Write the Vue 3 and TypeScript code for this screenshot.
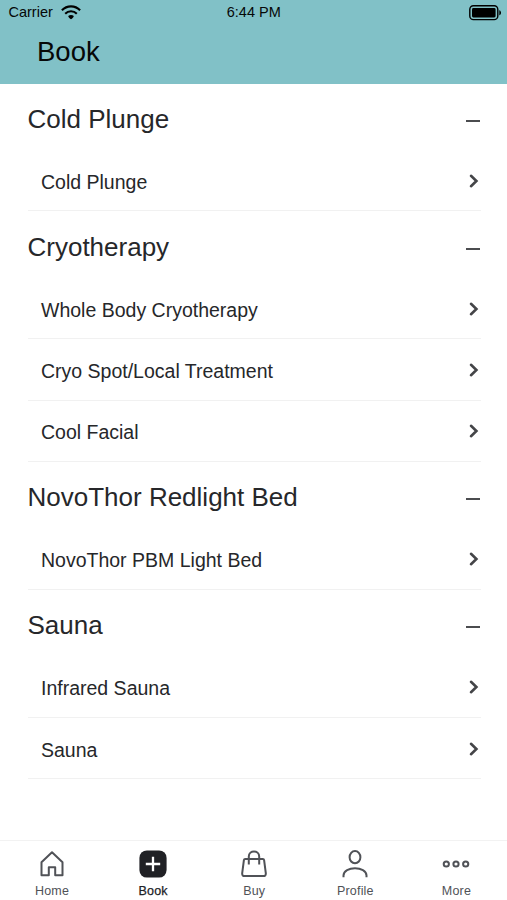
<script setup lang="ts">
interface Section {
  title: string
  items: string[]
}

type TabIcon = 'home' | 'book' | 'buy' | 'profile' | 'more'

interface Tab {
  label: string
  icon: TabIcon
}

const sections: Section[] = [
  { title: 'Cold Plunge', items: ['Cold Plunge'] },
  { title: 'Cryotherapy', items: ['Whole Body Cryotherapy', 'Cryo Spot/Local Treatment', 'Cool Facial'] },
  { title: 'NovoThor Redlight Bed', items: ['NovoThor PBM Light Bed'] },
  { title: 'Sauna', items: ['Infrared Sauna', 'Sauna'] },
]

const tabs: Tab[] = [
  { label: 'Home', icon: 'home' },
  { label: 'Book', icon: 'book' },
  { label: 'Buy', icon: 'buy' },
  { label: 'Profile', icon: 'profile' },
  { label: 'More', icon: 'more' },
]

const activeTab: TabIcon = 'book'
</script>

<template>
  <div class="screen">
    <header class="top">
      <div class="status">
        <div class="carrier">
          <span>Carrier</span>
          <svg class="wifi" width="20" height="15" viewBox="0 0 20 15">
            <g fill="none" stroke="#000" stroke-width="2.1">
              <path d="M0.9 5.3C5.9 0.1 14.1 0.1 19.1 5.3" />
              <path d="M4.2 8.7C7.4 5.4 12.6 5.4 15.8 8.7" />
            </g>
            <path d="M7.2 11.1C8.8 9.6 11.2 9.6 12.8 11.1C12.6 12.4 11 14 10 14.2C9 14 7.4 12.4 7.2 11.1Z" />
          </svg>
        </div>
        <span class="time">6:44 PM</span>
        <svg class="battery" width="33" height="16" viewBox="0 0 33 16">
          <rect x="0.8" y="0.8" width="28" height="13.8" rx="3.6" fill="none" stroke="#000" stroke-width="1.4" />
          <rect x="3" y="3" width="23.6" height="9.4" rx="1.4" />
          <path d="M30.3 5.2C32.6 5.8 32.6 9.6 30.3 10.2Z" />
        </svg>
      </div>
      <h1>Book</h1>
    </header>

    <main>
      <section v-for="section in sections" :key="section.title">
        <h2>
          <span>{{ section.title }}</span>
          <i class="minus"></i>
        </h2>
        <ul>
          <li v-for="item in section.items" :key="item">
            <span>{{ item }}</span>
            <svg class="chevron" width="12" height="16" viewBox="0 0 12 16">
              <path d="M3 2.8L8.4 8L3 13.2" fill="none" stroke="#444548" stroke-width="2.6" stroke-linecap="round" />
            </svg>
          </li>
        </ul>
      </section>
    </main>

    <nav>
      <div v-for="tab in tabs" :key="tab.icon" class="tab" :class="{ active: tab.icon === activeTab }">
        <svg width="30" height="30" viewBox="0 0 30 30" fill="none" stroke="#505257" stroke-width="2">
          <path
            v-if="tab.icon === 'home'"
            d="M4.5 13.2L15 3.2L25.5 13.2V26.3H18.2V18.2H11.8V26.3H4.5Z"
            stroke-linejoin="round"
          />
          <template v-else-if="tab.icon === 'book'">
            <rect x="1.4" y="1.4" width="27.2" height="27.2" rx="7.5" fill="#202125" stroke="none" />
            <path d="M15 7.8V22.2M7.8 15H22.2" stroke="#fff" stroke-width="2.3" />
          </template>
          <template v-else-if="tab.icon === 'buy'">
            <path
              d="M6.2 10H23.8C24.6 10 25 10.4 25.1 11.1L26.8 24C27 26 26.2 27.1 24.4 27.1H5.6C3.8 27.1 3 26 3.2 24L4.9 11.1C5 10.4 5.4 10 6.2 10Z"
            />
            <path d="M9.8 15.5V7.4C9.8 0.8 20.2 0.8 20.2 7.4V15.5" />
          </template>
          <template v-else-if="tab.icon === 'profile'">
            <ellipse cx="15" cy="8.2" rx="5.4" ry="6.1" />
            <path d="M3.5 28.2V26.6C3.5 16.8 26.5 16.8 26.5 26.6V28.2" />
          </template>
          <template v-else>
            <circle cx="5.3" cy="15" r="2.6" />
            <circle cx="15" cy="15" r="2.6" />
            <circle cx="24.7" cy="15" r="2.6" />
          </template>
        </svg>
        <span>{{ tab.label }}</span>
      </div>
    </nav>
  </div>
</template>

<style>
body {
  margin: 0;
  background: #fff;
}
</style>

<style scoped>
.screen {
  box-sizing: border-box;
  width: 507px;
  height: 900px;
  display: flex;
  flex-direction: column;
  overflow: hidden;
  background: #fff;
  color: #26272a;
  font-family: 'Liberation Sans', Arial, sans-serif;
}

.top {
  box-sizing: border-box;
  height: 83.5px;
  flex: none;
  background: #81c1c7;
  color: #060808;
}

.status {
  display: grid;
  grid-template-columns: 1fr auto 1fr;
  align-items: center;
  height: 25px;
  padding: 0 5px 0 8.5px;
  font-size: 14.5px;
}

.status span {
  padding-bottom: 2px;
}

.carrier {
  display: flex;
  align-items: center;
  gap: 8px;
}

.time {
  padding-right: 3px;
}

.battery {
  justify-self: end;
}

h1 {
  margin: 10px 0 0 37px;
  font-size: 27.5px;
  line-height: 34px;
  font-weight: 400;
}

main {
  flex: 1;
  padding: 0 26px 0 27.5px;
}

h2 {
  box-sizing: border-box;
  display: flex;
  align-items: center;
  justify-content: space-between;
  height: 66.5px;
  margin: 0;
  padding: 5px 1px 0 0;
  font-size: 26px;
  font-weight: 400;
}

.minus {
  width: 14px;
  height: 2px;
  margin-top: 3px;
  background: #4b4c4f;
}

ul {
  margin: 0;
  padding: 0;
  list-style: none;
}

li {
  box-sizing: border-box;
  display: flex;
  align-items: center;
  justify-content: space-between;
  height: 61.4px;
  padding: 4px 1.5px 0 13.5px;
  border-bottom: 1px solid #f1f1f1;
  font-size: 19.5px;
}

.chevron {
  margin-bottom: 3px;
}

nav {
  box-sizing: border-box;
  display: grid;
  grid-template-columns: repeat(5, 1fr);
  height: 60px;
  flex: none;
  padding-left: 1.5px;
  border-top: 1px solid #f2f2f2;
}

.tab {
  display: flex;
  flex-direction: column;
  align-items: center;
  padding-top: 8px;
  color: #505257;
  font-size: 12.5px;
  line-height: 16px;
  letter-spacing: 0.2px;
}

.tab span {
  margin-top: 4px;
}

.active {
  color: #202125;
  -webkit-text-stroke: 0.25px #202125;
}
</style>
